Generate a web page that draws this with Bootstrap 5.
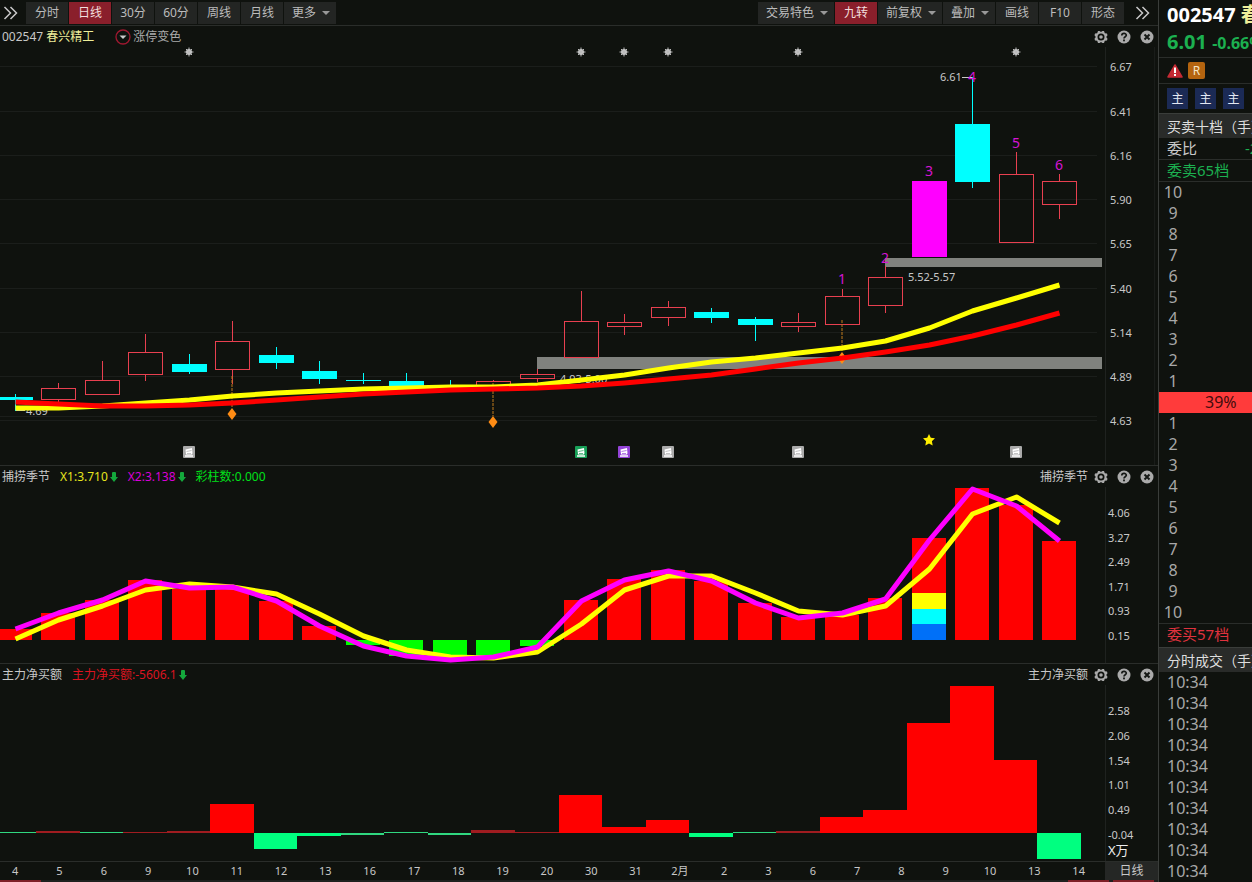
<!DOCTYPE html>
<html lang="zh-CN">
<head>
<meta charset="utf-8">
<meta name="viewport" content="width=device-width, initial-scale=1">
<title>002547 春兴精工 日线</title>
<link href="https://cdn.jsdelivr.net/npm/bootstrap@5.3.0/dist/css/bootstrap.min.css" rel="stylesheet">
<style>
  :root { --bg: #0f120e; --line: #2a2d2a; --fg: #c8c8c8; }
  body { background: var(--bg); color: var(--fg); font-family: "Noto Sans", "Noto Sans CJK SC", sans-serif; font-size: 12px; line-height: 20px; overflow-x: hidden; }
  button { font: inherit; color: inherit; background: none; border: 0; padding: 0; }
  svg { display: block; }
  .content { min-width: 0; }
  .toolbar { height: 26px; border-bottom: 1px solid var(--line); padding: 0 8px 0 3px; }
  .tool { height: 22px; min-width: 42px; padding: 0 8px; line-height: 22px; background: #232523; color: #bcbcbc; border-radius: 0; }
  .tool.on { background: #8a1f2b; color: #f2dede; }
  .tool.menu { display: flex; align-items: center; gap: 6px; padding-right: 6px; }
  .tool.menu::after { content: ""; border: 4px solid transparent; border-top-color: #999; border-bottom: 0; }
  .tool-row { gap: 1px; }
  .more-gap { margin-right: 11px; }
  .head { height: 21px; padding: 0 4px 0 2px; white-space: nowrap; }
  .panel + .panel { border-top: 1px solid var(--line); }
  .tools { gap: 9px; }
  .reading { display: flex; align-items: center; gap: 2px; margin-left: 10px; }
  .repeat-name { margin: 0 6px 0 auto; }
  .toggle { gap: 2px; color: #aaa; margin-left: 21px; }
  .c-name { color: #eeee9a; }
  .c-yellow { color: #e6e61e; }
  .c-magenta { color: #d800d8; }
  .c-green { color: #00e01a; }
  .c-red { color: #dc1420; }
  .plot { width: 100%; height: auto; overflow: visible; }
  .plot text { font-size: 11px; fill: var(--fg); }
  .plot .count { font-size: 14px; fill: #d414d4; text-anchor: middle; }
  .plot .unit { font-size: 13px; fill: #eee; }
  .plot rect { shape-rendering: crispEdges; }
  .axis { border-top: 1px solid var(--line); height: 19px; font-size: 11px; line-height: 18px; }
  .dates { margin-left: -7px; padding-right: 4px; }
  .dates > span { flex: 1 1 0; text-align: center; }
  .period { width: 53px; background: #252725; font-size: 12px; line-height: 18px; }
  .strip { height: 2px; background: #1e201e; }
  .strip > i { background: #7d1f26; width: 41px; }
  .side { width: 94px; border-left: 1px solid #3a3d3a; font-size: 16px; line-height: 21px; white-space: nowrap; }
  .side > * { padding-left: 8px; }
  .quote { height: 58px; border-bottom: 1px solid var(--line); font-size: 20px; font-weight: 700; line-height: 27px; padding-top: 1px; }
  .quote .pct { font-size: 16px; }
  .c-down { color: #1cb050; }
  .marks { height: 26px; border-bottom: 1px solid var(--line); gap: 5px; }
  .r-mark { width: 17px; height: 17px; background: #b4640f; color: #f4e6c8; border-radius: 2px; font-size: 12px; line-height: 17px; }
  .mains { height: 29px; gap: 7px; }
  .mains > button { flex: 0 0 21px; height: 21px; background: #1b2a55; color: #e4e8f4; line-height: 21px; font-size: 12px; }
  .bar-title { background: #292b29; border-top: 1px solid #3a3d3a; color: #dedede; font-size: 14px; height: 25px; line-height: 25px; }
  .row-line { border-bottom: 1px solid var(--line); height: 22px; font-size: 15px; line-height: 21px; }
  .ladder { color: #a8a8a8; }
  .ladder > div { width: 12px; display: flex; justify-content: center; }
  .ratio { background: #ff3b3b; color: #430c0c; padding-left: 46px; }
  .buy { height: 24px; line-height: 21px; border-top: 1px solid var(--line); font-size: 15px; color: #e0323e; }
  .ticks { color: #a8a8a8; }
</style>
<script src="https://cdn.jsdelivr.net/npm/bootstrap@5.3.0/dist/js/bootstrap.bundle.min.js"></script>
</head>
<body>
<svg width="0" height="0" class="position-absolute" aria-hidden="true">
  <symbol id="gear" viewBox="0 0 14 14"><path fill="#aaa" fill-rule="evenodd" d="M4 1h1.6L7 2l1.400-1H10l.8 2.300 2.200.3.5 1.700L12.200 7l1.300 1.700-.5 1.700-2.200.3L10 13H8.400L7 12l-1.400 1H4l-.8-2.300-2.200-.3-.5-1.700L1.800 7 .5 5.300 1 3.600l2.200-.3zM7 3.500a3.500 3.500 0 1 0 0 7 3.500 3.500 0 0 0 0-7z"/><circle cx="7" cy="7" r="1.800" fill="#aaa"/></symbol>
  <symbol id="help" viewBox="0 0 14 14"><circle cx="7" cy="7" r="6.500" fill="#aaa"/><path d="M4.800 5.600C4.800 2.800 9.300 2.800 9.300 5.300 9.300 6.800 7 6.800 7 8.600" fill="none" stroke="#151815" stroke-width="1.700"/><rect x="6.100" y="9.500" width="1.800" height="1.800" fill="#151815"/></symbol>
  <symbol id="shut" viewBox="0 0 14 14"><circle cx="7" cy="7" r="6.500" fill="#aaa"/><path d="M4.500 4.500l5 5M9.500 4.500l-5 5" stroke="#151815" stroke-width="2"/></symbol>
  <symbol id="chev" viewBox="0 0 15 14"><path d="M1.500 1l6 6-6 6M7.500 1l6 6-6 6" fill="none" stroke="#c8c8c8" stroke-width="1.500"/></symbol>
  <symbol id="down" viewBox="0 0 8 10"><path d="M2 1q0-1 1-1h2q1 0 1 1v4h2L4 10 0 5h2z" fill="#14a83c"/></symbol>
  <symbol id="sun" viewBox="-5 -5 10 10"><circle r="3" fill="#ccc"/><path d="M0-4.500v9M-4.500 0h9M-3-3l6 6M3-3l-6 6" stroke="#bbb" stroke-width="1"/></symbol>
  <symbol id="note" viewBox="0 0 12 12"><rect width="12" height="12" rx="1" fill="currentColor"/><path d="M2.500 3.500l6.500-1.500.5 5-.5 1.500H3z" fill="#fff"/><path d="M2 10h8" stroke="#fff" stroke-width="1.500"/><path d="M3.500 5.500l5-1M4 7.500h4" stroke="currentColor" stroke-width=".7"/></symbol>
</svg>

<div class="d-flex">
  <main class="content flex-grow-1">
    <nav class="toolbar d-flex align-items-center" aria-label="周期">
      <button type="button" aria-label="展开" class="me-2"><svg width="15" height="14"><use href="#chev"/></svg></button>
      <div class="tool-row d-flex flex-grow-1">
        <button type="button" class="tool">分时</button>
        <button type="button" class="tool on">日线</button>
        <button type="button" class="tool">30分</button>
        <button type="button" class="tool">60分</button>
        <button type="button" class="tool">周线</button>
        <button type="button" class="tool">月线</button>
        <button type="button" class="tool menu">更多</button>
      </div>
      <div class="tool-row more-gap d-flex">
        <button type="button" class="tool menu">交易特色</button>
        <button type="button" class="tool on">九转</button>
        <button type="button" class="tool menu">前复权</button>
        <button type="button" class="tool menu">叠加</button>
        <button type="button" class="tool">画线</button>
        <button type="button" class="tool">F10</button>
        <button type="button" class="tool">形态</button>
      </div>
      <button type="button" aria-label="更多工具"><svg width="15" height="14"><use href="#chev"/></svg></button>
    </nav>

    <section class="panel">
      <div class="head d-flex align-items-center">
        <div>002547 <span class="c-name">春兴精工</span></div>
        <button type="button" class="toggle d-flex align-items-center">
          <svg width="16" height="16" viewBox="0 0 16 16"><circle cx="8" cy="8" r="7" fill="none" stroke="#a01830" stroke-width="1.300"/><path d="M4.500 6.500h7L8 10z" fill="#ccc"/></svg>
          <span>涨停变色</span>
        </button>
        <div class="tools d-flex ms-auto">
          <button type="button" aria-label="设置"><svg width="14" height="14"><use href="#gear"/></svg></button>
          <button type="button" aria-label="帮助"><svg width="14" height="14"><use href="#help"/></svg></button>
          <button type="button" aria-label="关闭"><svg width="14" height="14"><use href="#shut"/></svg></button>
        </div>
      </div>
      <svg class="plot" id="kline" viewBox="0 47 1158 418"></svg>
    </section>

    <section class="panel">
      <div class="head d-flex align-items-center">
        <span>捕捞季节</span>
        <span class="reading c-yellow">X1:3.710<svg width="8" height="10"><use href="#down"/></svg></span>
        <span class="reading c-magenta">X2:3.138<svg width="8" height="10"><use href="#down"/></svg></span>
        <span class="reading c-green">彩柱数:0.000</span>
        <span class="repeat-name">捕捞季节</span>
        <div class="tools d-flex">
          <button type="button" aria-label="设置"><svg width="14" height="14"><use href="#gear"/></svg></button>
          <button type="button" aria-label="帮助"><svg width="14" height="14"><use href="#help"/></svg></button>
          <button type="button" aria-label="关闭"><svg width="14" height="14"><use href="#shut"/></svg></button>
        </div>
      </div>
      <svg class="plot" id="season" viewBox="0 487 1158 176"></svg>
    </section>

    <section class="panel">
      <div class="head d-flex align-items-center">
        <span>主力净买额</span>
        <span class="reading c-red">主力净买额:-5606.1<svg width="8" height="10"><use href="#down"/></svg></span>
        <span class="repeat-name">主力净买额</span>
        <div class="tools d-flex">
          <button type="button" aria-label="设置"><svg width="14" height="14"><use href="#gear"/></svg></button>
          <button type="button" aria-label="帮助"><svg width="14" height="14"><use href="#help"/></svg></button>
          <button type="button" aria-label="关闭"><svg width="14" height="14"><use href="#shut"/></svg></button>
        </div>
      </div>
      <svg class="plot" id="netbuy" viewBox="0 685 1158 176"></svg>
    </section>

    <div class="axis d-flex">
      <div class="dates d-flex flex-grow-1">
        <span>4</span><span>5</span><span>6</span><span>9</span><span>10</span><span>11</span><span>12</span><span>13</span><span>16</span><span>17</span><span>18</span><span>19</span><span>20</span><span>30</span><span>31</span><span>2月</span><span>2</span><span>3</span><span>6</span><span>7</span><span>8</span><span>9</span><span>10</span><span>13</span><span>14</span>
      </div>
      <button type="button" class="period">日线</button>
    </div>
    <div class="strip d-flex gap-1 pe-1"><i></i><i class="ms-auto"></i><i></i></div>
  </main>

  <aside class="side flex-shrink-0 overflow-hidden">
    <div class="quote">
      <div><span class="text-white">002547</span> <span class="c-name">春兴精工</span></div>
      <div class="c-down">6.01 <span class="pct">-0.66%</span></div>
    </div>
    <div class="marks d-flex align-items-center">
      <svg width="16" height="14" viewBox="0 0 16 14"><path d="M8 1l7 12H1z" fill="#c42a34" stroke="#c42a34" stroke-width="1.500" stroke-linejoin="round"/><path d="M8 3.500v5.500M8 10v2" stroke="#fff" stroke-width="2"/></svg>
      <span class="r-mark text-center">R</span>
    </div>
    <div class="mains d-flex align-items-center">
      <button type="button">主</button><button type="button">主</button><button type="button">主</button>
    </div>
    <div class="bar-title">买卖十档（手）</div>
    <div class="row-line d-flex"><span>委比</span><span class="c-down ms-5">-28.5%</span></div>
    <div class="row-line c-down">委卖65档</div>
    <div class="ladder ps-2"><div>10</div><div>9</div><div>8</div><div>7</div><div>6</div><div>5</div><div>4</div><div>3</div><div>2</div><div>1</div></div>
    <div class="ratio">39%</div>
    <div class="ladder ps-2"><div>1</div><div>2</div><div>3</div><div>4</div><div>5</div><div>6</div><div>7</div><div>8</div><div>9</div><div>10</div></div>
    <div class="buy">委买57档</div>
    <div class="bar-title">分时成交（手）</div>
    <div class="ticks"><div>10:34</div><div>10:34</div><div>10:34</div><div>10:34</div><div>10:34</div><div>10:34</div><div>10:34</div><div>10:34</div><div>10:34</div><div>10:34</div></div>
  </aside>
</div>

<script>
const STEP = 43.54, FIRST = 14.5;
const cx = i => Math.round(FIRST + STEP * i);
const rect = (x, y, w, h, fill) => `<rect x="${x}" y="${y}" width="${w}" height="${h}" fill="${fill}"/>`;
const line = (ys, color) => `<polyline points="${ys.map((y, i) => cx(i) + .5 + ',' + y).join(' ')}" fill="none" stroke="${color}" stroke-width="5" stroke-linejoin="round"/>`;
const text = (x, y, s, cls = '') => `<text x="${x}" y="${y}" class="${cls}">${s}</text>`;
const scale = (x, list) => list.map(([s, y]) => text(x, y + 4, s)).join('');
const icon = (id, x, y, size, color = '') => `<use href="#${id}" x="${x - size / 2}" y="${y - size / 2}" width="${size}" height="${size}" color="${color}"/>`;

/* Daily candles: kind, body top, body bottom, wick top, wick bottom */
const candles = [
  ['d',397,400,394,411],['u',388,400,383,403],['u',380,395,361,395],['u',352,375,334,381],['d',364,372,354,374],
  ['u',341,370,321,384],['d',355,363,347,369],['d',371,379,361,384],['d',380,381,373,384],['d',381,388,373,388],
  ['d',385,388,380,388],['u',381,388,380,388],['u',374,379,369,382],['u',321,358,291,358],['u',322,327,314,335],
  ['u',307,318,301,326],['d',312,318,308,323],['d',319,325,317,341],['u',322,327,313,332],['u',296,325,289,325],
  ['u',277,306,266,313],['m',181,257,181,257],['d',124,182,77,188],['u',174,243,152,243],['u',181,205,174,219]
];
let k = '';
const prices = [['6.67',67],['6.41',112],['6.16',156],['5.90',200],['5.65',244],['5.40',289],['5.14',333],['4.89',377],['4.63',421]];
prices.forEach(p => k += rect(0, p[1] - 1, 1097, 1, '#1b1e1b'));
k += rect(0, 416, 1097, 1, '#1b1e1b') + rect(1105, 47, 1, 418, '#1f221f') + rect(1154, 47, 1, 418, '#191c19');
k += rect(537, 357, 565, 12, '#80827e') + rect(885, 258, 217, 9, '#80827e');
k += text(560, 383, '4.93-5.00') + text(908, 281, '5.52-5.57') + text(26, 415, '4.69') + text(940, 81, '6.61');
k += rect(16, 410, 9, 1, '#c8c8c8') + rect(962, 77, 10, 1, '#c8c8c8');
const tone = { d: '#00ffff', u: '#e84050', m: '#ff00ff' };
candles.forEach(([kind, top, bot, hi, lo], i) => {
  const c = cx(i), col = tone[kind];
  if (top > hi) k += rect(c, hi, 1, top - hi, col);
  if (lo > bot) k += rect(c, bot, 1, lo - bot, col);
  if (kind === 'u') k += rect(c - 17, top, 35, 1, col) + rect(c - 17, bot - 1, 35, 1, col) + rect(c - 17, top, 1, bot - top, col) + rect(c + 17, top, 1, bot - top, col);
  else k += rect(c - 17, top, 35, bot - top, col);
});
[[232,376,414],[493,383,422],[842,320,358]].forEach(([x, y1, y2]) => {
  k += `<path d="M${x} ${y1}V${y2 - 6}" stroke="#c07a1c" stroke-dasharray="3 1"/><path d="M${x} ${y2 - 6}l4.500 6-4.500 6-4.500-6z" fill="#ff8c14"/>`;
});
k += line([408,408,406,403,400,396,393,391,389,388,387,387,385,380,375,368,362,358,353,348,341,328,311,298,285], '#ffff00');
k += line([402,404,406,406,405,403,400,397,394,392,390,389,388,386,383,379,375,369,363,358,352,345,336,325,313], '#ff0000');
[[19,284],[20,263],[21,176],[22,82],[23,148],[24,170]].forEach(([i, y], n) => k += text(cx(i), y, n + 1, 'count'));
[189,581,624,668,798,1016].forEach((x, n) => k += icon('sun', x, 52, 10) + icon('note', x, 452, 12, ['#aaa','#18a058','#9444d8'][n > 2 ? 0 : n]));
k += '<path d="M929 434l1.800 3.800 4.200.5-3.100 2.900.8 4.200-3.700-2-3.700 2 .8-4.200-3.100-2.900 4.200-.5z" fill="#ffee00"/>';
k += scale(1110, prices);
document.getElementById('kline').innerHTML = k;

/* Season indicator: columns rise or fall from y = 640 */
const cols = [629,613,600,580,589,587,601,626,645,656,657,656,646,600,579,570,581,603,617,615,598,538,488,505,541];
let s = rect(1105, 487, 1, 176, '#1f221f');
cols.forEach((y, i) => {
  const x = cx(i) - 17;
  s += y < 640 ? rect(x, y, 34, 640 - y, '#ff0000') : rect(x, 640, 34, y - 640, '#00ff00');
});
const tall = cx(21) - 17;
s += rect(tall, 593, 34, 16, '#ffff00') + rect(tall, 609, 34, 15, '#00ffff') + rect(tall, 624, 34, 16, '#0070f8');
s += line([639,620,606,590,584,587,594,614,636,650,657,658,652,624,590,576,576,593,611,615,606,569,514,497,523], '#ffff00');
s += line([629,613,600,581,588,587,601,626,646,656,660,657,647,601,580,571,581,603,618,613,599,540,489,506,541], '#ff00ff');
s += scale(1108, [['4.06',513],['3.27',538],['2.49',562],['1.71',587],['0.93',611],['0.15',636]]);
document.getElementById('season').innerHTML = s;

/* Net buying: touching columns round y = 833 */
const net = [834,831,834,832,831,804,849,836,835,834,835,830,832,795,827,820,837,834,831,817,810,723,686,760,859];
let n = rect(1105, 685, 1, 176, '#1f221f');
net.forEach((y, i) => {
  const x = cx(i) - 22, w = cx(i + 1) - 22 - x;
  n += y < 833 ? rect(x, y, w, 833 - y, y > 829 ? '#a01c20' : '#ff0000') : rect(x, y === 834 ? 832 : 833, w, y === 834 ? 1 : y - 833, y < 836 ? '#30d880' : '#00ff80');
});
n += scale(1108, [['2.58',711],['2.06',736],['1.54',761],['1.01',785],['0.49',810],['-0.04',835]]) + text(1108, 855, 'X万', 'unit');
document.getElementById('netbuy').innerHTML = n;
</script>
</body>
</html>
